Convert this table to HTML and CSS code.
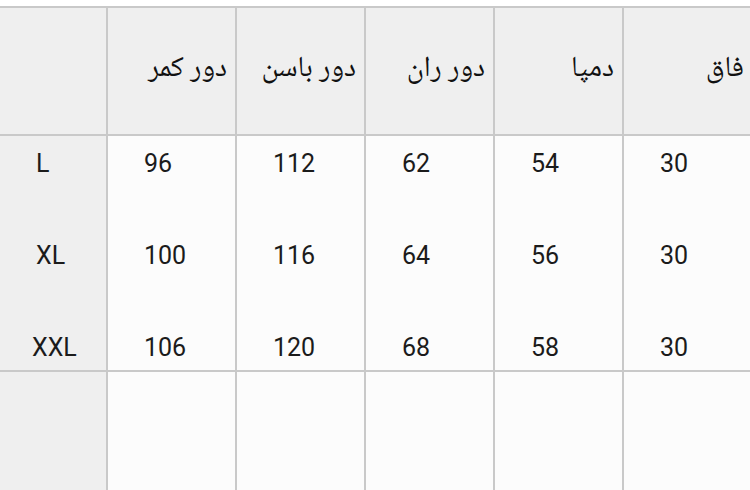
FILE: index.html
```html
<!DOCTYPE html>
<html lang="fa">
<head>
<meta charset="utf-8">
<title>جدول سایز</title>
<link rel="stylesheet" href="styles.css">
</head>
<body>
<div class="page">
  <div class="table">
    <div class="cell head side"></div>
    <div class="cell head"><span class="ht" dir="rtl">دور کمر</span></div>
    <div class="cell head"><span class="ht" dir="rtl">دور باسن</span></div>
    <div class="cell head"><span class="ht" dir="rtl">دور ران</span></div>
    <div class="cell head"><span class="ht" dir="rtl">دمپا</span></div>
    <div class="cell head"><span class="ht" dir="rtl">فاق</span></div>

    <div class="cell side data"><span>L</span><span>XL</span><span class="xxl">XXL</span></div>
    <div class="cell data"><span>96</span><span>100</span><span>106</span></div>
    <div class="cell data"><span>112</span><span>116</span><span>120</span></div>
    <div class="cell data"><span>62</span><span>64</span><span>68</span></div>
    <div class="cell data"><span>54</span><span>56</span><span>58</span></div>
    <div class="cell data"><span>30</span><span>30</span><span>30</span></div>

    <div class="cell side"></div>
    <div class="cell"></div>
    <div class="cell"></div>
    <div class="cell"></div>
    <div class="cell"></div>
    <div class="cell"></div>
  </div>
</div>
</body>
</html>
```
FILE: styles.css
```css
html, body {
  margin: 0;
  padding: 0;
  background: #ffffff;
}
.page {
  width: 750px;
  height: 490px;
  overflow: hidden;
  padding-top: 6px;
  box-sizing: border-box;
}
.table {
  display: grid;
  width: 752px;
  grid-template-columns: 106px 127px 127px 127px 127px 128px;
  grid-template-rows: 126px 234px 130px;
  gap: 2px;
  padding-top: 2px;
  background: #c9c9c9;
  font-family: Roboto, "Noto Sans", sans-serif;
  color: #1b1b1b;
}
.cell {
  background: #fcfcfc;
}
.cell.head {
  background: #efefef;
  display: flex;
  align-items: center;
  justify-content: flex-end;
  padding-right: 8px;
}
.cell.head.side {
  padding-right: 0;
}
.cell.side {
  background: #efefef;
}
.ht {
  font-family: "Noto Naskh Arabic", "Noto Sans Arabic", "DejaVu Sans", sans-serif;
  font-size: 29px;
  color: #111111;
  padding-bottom: 4px;
}
.data {
  display: flex;
  flex-direction: column;
  gap: 68px;
  padding-top: 16px;
  padding-left: 36px;
  font-size: 25px;
}
.data span {
  line-height: 24px;
  height: 24px;
}
.data .xxl {
  margin-left: -4px;
}
```
